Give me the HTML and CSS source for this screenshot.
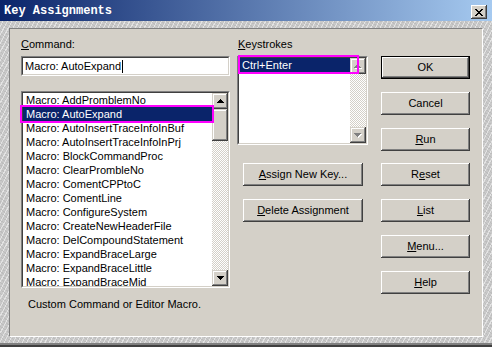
FILE: index.html
```html
<!DOCTYPE html>
<html>
<head>
<meta charset="utf-8">
<link rel="stylesheet" href="styles.css">
</head>
<body>
<div class="window">
  <div class="titlebar">
    <span class="title">Key Assignments</span>
    <span class="close"><svg width="8" height="7" viewBox="0 0 8 7" shape-rendering="crispEdges"><path d="M0 0h2v1h1v1h2V1h1V0h2v1H7v1H6v1H5v1h1v1h1v1h1v1H6V6H5V5H3v1H2v1H0V6h1V5h1V4h1V3H2V2H1V1H0z" fill="#000"/></svg></span>
  </div>
  <div class="frame">
    <div class="panel">
      <div class="col-left">
        <div class="label"><u>C</u>ommand:</div>
        <div class="field">
          <div class="field-in input">Macro: AutoExpand<span class="caret"></span></div>
        </div>
        <div class="field cmd-list">
          <div class="field-in list-in">
            <ul class="items">
              <li>Macro: AddPromblemNo</li>
              <li class="sel">Macro: AutoExpand</li>
              <li>Macro: AutoInsertTraceInfoInBuf</li>
              <li>Macro: AutoInsertTraceInfoInPrj</li>
              <li>Macro: BlockCommandProc</li>
              <li>Macro: ClearPrombleNo</li>
              <li>Macro: ComentCPPtoC</li>
              <li>Macro: ComentLine</li>
              <li>Macro: ConfigureSystem</li>
              <li>Macro: CreateNewHeaderFile</li>
              <li>Macro: DelCompoundStatement</li>
              <li>Macro: ExpandBraceLarge</li>
              <li>Macro: ExpandBraceLittle</li>
              <li>Macro: ExpandBraceMid</li>
            </ul>
            <div class="scrollbar">
              <div class="sb-btn"><svg width="7" height="4" viewBox="0 0 7 4" shape-rendering="crispEdges"><path d="M3 0h1v1h1v1h1v1h1v1H0V3h1V2h1V1h1z" fill="#000"/></svg></div>
              <div class="sb-btn thumb"></div>
              <div class="sb-track"></div>
              <div class="sb-btn"><svg width="7" height="4" viewBox="0 0 7 4" shape-rendering="crispEdges"><path d="M0 0h7v1H6v1H5v1H4v1H3V3H2V2H1V1H0z" fill="#000"/></svg></div>
            </div>
          </div>
          <div class="mark mark-cmd"></div>
        </div>
        <div class="desc">Custom Command or Editor Macro.</div>
      </div>
      <div class="col-mid">
        <div class="label key-label"><u>K</u>eystrokes</div>
        <div class="field key-list">
          <div class="field-in list-in">
            <ul class="items">
              <li class="sel key-sel">Ctrl+Enter</li>
            </ul>
            <div class="scrollbar">
              <div class="sb-btn"><svg width="8" height="5" viewBox="0 0 8 5" shape-rendering="crispEdges"><path d="M4 1h1v1h1v1h1v1h1v1H1V4h1V3h1V2h1z" fill="#fff"/><path d="M3 0h1v1h1v1h1v1h1v1H0V3h1V2h1V1h1z" fill="#808080"/></svg></div>
              <div class="sb-track"></div>
              <div class="sb-btn"><svg width="8" height="5" viewBox="0 0 8 5" shape-rendering="crispEdges"><path d="M1 1h7v1H7v1H6v1H5v1H4V4H3V3H2V2H1z" fill="#fff"/><path d="M0 0h7v1H6v1H5v1H4v1H3V3H2V2H1V1H0z" fill="#808080"/></svg></div>
            </div>
          </div>
          <div class="mark mark-key"></div>
        </div>
        <div class="btn wide first"><span><u>A</u>ssign New Key...</span></div>
        <div class="btn wide"><span><u>D</u>elete Assignment</span></div>
      </div>
      <div class="col-right">
        <div class="btn default first"><span>OK</span></div>
        <div class="btn"><span>Cancel</span></div>
        <div class="btn"><span><u>R</u>un</span></div>
        <div class="btn tight"><span>R<u>e</u>set</span></div>
        <div class="btn"><span><u>L</u>ist</span></div>
        <div class="btn"><span><u>M</u>enu...</span></div>
        <div class="btn"><span><u>H</u>elp</span></div>
      </div>
    </div>
  </div>
</div>
</body>
</html>
```
FILE: styles.css
```css
html, body {
  margin: 0;
  padding: 0;
}
body {
  font-family: "Liberation Sans", Arial, sans-serif;
  font-size: 11px;
  color: #000;
  width: 492px;
  height: 347px;
  overflow: hidden;
}
.window {
  width: 492px;
  height: 347px;
  box-sizing: border-box;
  display: flex;
  flex-direction: column;
  background-color: #c9c9c9;
  background-image:
    repeating-linear-gradient(118deg, rgba(255,255,255,0.5) 0 1px, transparent 1px 4px),
    repeating-linear-gradient(35deg, rgba(0,0,0,0.06) 0 1px, transparent 1px 3px);
  border-bottom: 2px solid #404040;
}
.titlebar {
  height: 21px;
  flex: none;
  display: flex;
  align-items: center;
  justify-content: space-between;
  padding: 0 5px 0 4px;
  background: linear-gradient(to right, #0a246a, #a6caf0);
}
.title {
  color: #fff;
  font-family: "Liberation Mono", "Courier New", monospace;
  font-weight: bold;
  font-size: 12px;
  line-height: 14px;
  margin-top: 1px;
}
.close {
  width: 16px;
  height: 14px;
  margin-top: 3px;
  background: #d4d0c8;
  display: flex;
  align-items: center;
  justify-content: center;
  box-shadow: inset -1px -1px #404040, inset 1px 1px #fff, inset -2px -2px #808080;
}
.frame {
  flex: 1;
  display: flex;
  padding: 7px 9px 6px 9px;
  border-bottom: 2px solid #808080;
}
.panel {
  flex: 1;
  display: flex;
  align-items: flex-start;
  background: #d4d0c8;
  border: 1px solid;
  border-color: #808080 #fff #fff #808080;
  padding: 9px 0 0 11px;
}
.col-left {
  width: 209px;
  margin-right: 7px;
}
.col-mid {
  width: 131px;
  margin-right: 13px;
}
.col-right {
  width: 89px;
}
.label {
  height: 18px;
  line-height: 13px;
}
.key-label {
  padding-left: 1px;
}
.field {
  position: relative;
  box-sizing: border-box;
  border: 1px solid;
  border-color: #808080 #fff #fff #808080;
}
.field-in {
  box-sizing: border-box;
  height: 100%;
  border: 1px solid;
  border-color: #404040 #d4d0c8 #d4d0c8 #404040;
  background: #fff;
}
.input {
  height: 18px;
  line-height: 16px;
  padding-left: 2px;
  white-space: nowrap;
}
.caret {
  display: inline-block;
  width: 1px;
  height: 13px;
  background: #000;
  vertical-align: -3px;
  margin-left: 1px;
}
.cmd-list {
  margin-top: 15px;
  height: 197px;
}
.key-list {
  height: 89px;
}
.list-in {
  display: flex;
}
.items {
  flex: 1;
  list-style: none;
  margin: 0;
  padding: 0;
  overflow: hidden;
}
.items li {
  height: 14px;
  line-height: 14px;
  padding-left: 3px;
  white-space: nowrap;
}
.items li.sel {
  background: #0a246a;
  color: #fff;
}
.items li.key-sel {
  padding-left: 3px;
}
.scrollbar {
  width: 16px;
  flex: none;
  display: flex;
  flex-direction: column;
  background: repeating-conic-gradient(#fff 0 25%, #d4d0c8 0 50%) 0 0 / 2px 2px;
}
.sb-btn {
  width: 16px;
  height: 16px;
  flex: none;
  box-sizing: border-box;
  background: #d4d0c8;
  display: flex;
  align-items: center;
  justify-content: center;
  box-shadow: inset -1px -1px #404040, inset 1px 1px #d4d0c8, inset -2px -2px #808080, inset 2px 2px #fff;
}
.sb-btn.thumb {
  height: 32px;
}
.sb-track {
  flex: 1;
}
.mark {
  position: absolute;
  box-sizing: border-box;
  border: 2px solid #ff00ff;
}
.mark-cmd {
  left: -2px;
  top: 13px;
  width: 194px;
  height: 18px;
}
.mark-key {
  left: 0;
  top: -2px;
  width: 121px;
  height: 19px;
}
.desc {
  margin-top: 10px;
  padding-left: 7px;
  line-height: 13px;
  white-space: nowrap;
}
.btn {
  box-sizing: border-box;
  height: 23px;
  margin-top: 13px;
  background: #d4d0c8;
  display: flex;
  align-items: center;
  justify-content: center;
  box-shadow: inset -1px -1px #404040, inset 1px 1px #fff, inset -2px -2px #808080, inset 2px 2px #d4d0c8;
  white-space: nowrap;
}
.btn span {
  line-height: 13px;
}
.btn.first {
  margin-top: 18px;
}
.btn.tight {
  margin-top: 12px;
}
.btn.wide {
  width: 120px;
  margin-left: 6px;
}
.btn.wide.first {
  margin-top: 18px;
}
.btn.default {
  box-shadow: inset 0 0 0 1px #000, inset -2px -2px #404040, inset 2px 2px #fff, inset -3px -3px #808080;
}
u {
  text-decoration: underline;
  text-underline-offset: 1px;
}
```
